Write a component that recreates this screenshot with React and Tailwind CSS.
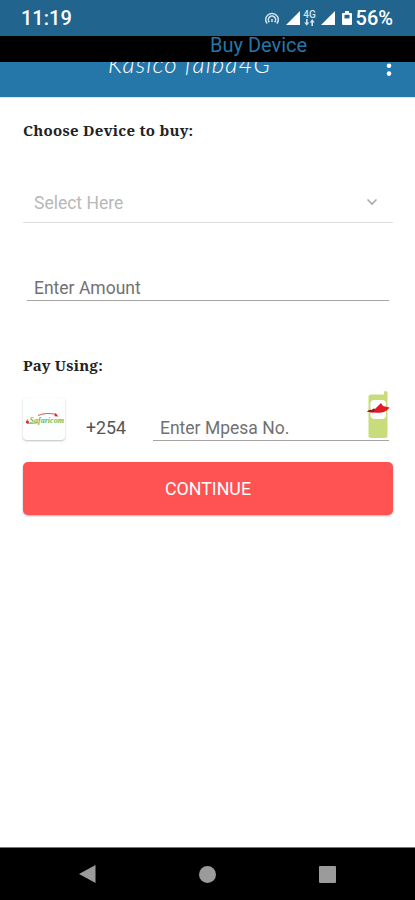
const StatusBar = () => (
  <div className="flex h-9 items-center bg-[#21658f] pl-[21px] pr-[22px] text-white">
    <span className="text-[20px] font-medium leading-9">11:19</span>
    <div className="ml-auto flex items-center">
      {/* Hotspot */}
      <svg className="mr-[6px] h-4 w-4" viewBox="0 0 16 16" fill="none" stroke="#d5e4ee" strokeWidth="1.5">
        <path d="M3.2 13.5A6.3 6 0 1 1 12.8 13.5" />
        <path d="M5.4 12.2A3.6 3.6 0 1 1 10.6 12.2" />
        <path d="M8 9V12" />
      </svg>
      <svg className="h-4 w-[15px]" viewBox="0 0 15 16">
        <path d="M0 15L14 1V15Z" fill="#fff" />
      </svg>
      <div className="ml-[3px] mr-[5px] flex w-3 flex-col items-center">
        <span className="text-[10px] font-medium leading-[9px] text-[#d5e4ee]">4G</span>
        <svg className="h-[7px] w-[11px]" viewBox="0 0 11 7" fill="#d5e4ee">
          <path d="M2 0h1.6v3.5H5.2L2.8 6.7.2 3.5H2Z" />
          <path d="M7.4 7H9V3.4h1.8L8.2.1 5.8 3.4h1.6Z" />
        </svg>
      </div>
      <svg className="h-4 w-[15px]" viewBox="0 0 15 16">
        <path d="M0 15L14 1V15Z" fill="#fff" />
      </svg>
      {/* Battery */}
      <svg className="ml-[6px] mr-1 h-4 w-[10px]" viewBox="0 0 10 16">
        <path d="M3 1h4v2h2q1 0 1 1v10q0 1-1 1H1q-1 0-1-1V4q0-1 1-1h2Z" fill="#fff" />
        <path d="M2.5 4.8h5v3.6h-5Z" fill="#21658f" />
      </svg>
      <span className="text-[20px] font-medium leading-9">56%</span>
    </div>
  </div>
)

const AppBar = () => (
  <div className="flex h-[35px] items-start justify-between overflow-hidden bg-[#2477a8] pl-[108px] pr-[23px]">
    <span className="-mt-[10px] whitespace-nowrap font-['Lato',sans-serif] text-[24px] font-light italic leading-6 tracking-[1.1px] text-white">
      Kasico faiba4G
    </span>
    <svg className="h-4 w-[6px]" viewBox="0 0 6 16" fill="#fff">
      <circle cx="3" cy="3.8" r="2.3" />
      <circle cx="3" cy="11.6" r="2.3" />
    </svg>
  </div>
)

const SafaricomLogo = () => (
  <div className="flex h-[42px] w-[42px] items-center justify-center rounded bg-[#fcfffd] shadow-[0_1px_2px_rgba(0,0,0,0.25)]">
    <svg className="h-[42px] w-[42px]" viewBox="0 0 42 42">
      <path d="M15 17.5Q23 14 34 16.5" fill="none" stroke="#e2534f" strokeWidth="1" />
      <path d="M32 15L35.5 18.5L31.5 18.3Z" fill="#d92a30" />
      <path d="M5 21Q1.5 25.5 5.5 25.5Q10 25.7 15 24.7" fill="none" stroke="#eb8a86" strokeWidth="1" />
      <circle cx="4.5" cy="24" r="1.5" fill="#d92a30" />
      <text
        x="6.5"
        y="24.5"
        textLength="34.5"
        lengthAdjust="spacingAndGlyphs"
        fill="#6cbd5d"
        fontFamily="Liberation Serif, serif"
        fontSize="8"
        fontWeight="bold"
        fontStyle="italic"
      >
        Safaricom
      </text>
    </svg>
  </div>
)

const MpesaPhone = () => (
  <svg className="-mr-px h-12 w-[23px]" viewBox="0 0 23 48">
    <path d="M1.5 6Q1.5 3.5 4 3.5H17V1Q17 0 18.5 0Q20.5 0 20.5 1.5V44.5Q20.5 47 18 47H4Q1.5 47 1.5 44.5Z" fill="#c9dc7b" />
    <rect x="3.5" y="9" width="15.5" height="19" rx="4" fill="#fff" />
    <path d="M0 20.5Q3 18 5 19Q7 16.5 8 18Q11 15 14 12L16 15L22.5 16.5Q20 20.5 15 21.5Q7 22.5 0 20.5Z" fill="#e21b24" />
    <path d="M0 20.5Q3 18 5 19Q7 16.5 8 19L7 21Q3 21.5 0 20.5Z" fill="#8f2028" />
  </svg>
)

const NavBar = () => (
  <div className="flex h-[53px] items-center justify-between border-t border-[#777] bg-black px-[79px]">
    <svg className="h-[18px] w-[17px]" viewBox="0 0 17 18">
      <path d="M0 9L16.5 0V18Z" fill="#9b9b9b" />
    </svg>
    <div className="h-[17px] w-[17px] rounded-full bg-[#9b9b9b]" />
    <div className="h-[17px] w-[17px] rounded-[1px] bg-[#9b9b9b]" />
  </div>
)

const App = () => {
  return (
    <div className="flex h-[900px] w-[415px] flex-col overflow-hidden bg-white font-['Roboto',sans-serif]">
      <StatusBar />
      <div className="h-[26px] bg-black pl-[210px] text-[20px] leading-[18px] text-[#2477a8]">
        Buy Device
      </div>
      <AppBar />

      <main className="flex flex-1 flex-col border-t border-[#d9e3ef] pl-[23px] pr-[22px]">
        <h2 className="mt-[22px] whitespace-nowrap font-['Noto_Serif','DejaVu_Serif_Condensed','DejaVu_Serif',serif] text-[15px] font-bold leading-5 tracking-[0.25px] text-[#222]">
          Choose Device to buy:
        </h2>

        <div className="mt-[42px] flex h-[41px] items-center justify-between border-b border-[#dedede] pl-[11px] pr-[15px]">
          <span className="pt-[2px] text-[17.5px] text-[#b8b8b8]">Select Here</span>
          <svg className="h-3 w-3" viewBox="0 0 12 12" fill="none" stroke="#aaa" strokeWidth="1.6">
            <path d="M1.5 3.5L6 8L10.5 3.5" />
          </svg>
        </div>

        <div className="mx-1 mt-[51px] flex h-[27px] items-center border-b border-[#a5a5a5] pl-[7px] pt-[2px] text-[17.5px] text-[#717171]">
          Enter Amount
        </div>

        <h2 className="mt-[54px] whitespace-nowrap font-['Noto_Serif','DejaVu_Serif_Condensed','DejaVu_Serif',serif] text-[15px] font-bold leading-5 tracking-[0.25px] text-[#222]">
          Pay Using:
        </h2>

        <div className="mt-4 flex h-[50px] items-end">
          <div className="pb-px">
            <SafaricomLogo />
          </div>
          <span className="ml-[21px] w-[67px] pb-px text-[17.8px] leading-6 text-[#555]">+254</span>
          <div className="mr-1 flex h-[50px] flex-1 items-start justify-between border-b border-[#a5a5a5] pl-[7px]">
            <span className="mt-[25px] text-[17.5px] leading-6 text-[#717171]">Enter Mpesa No.</span>
            <MpesaPhone />
          </div>
        </div>

        <button className="mt-[21px] h-[53px] w-full rounded-[5px] bg-[#ff5252] pt-[2px] text-[17.8px] text-white shadow-[0_1px_2px_rgba(0,0,0,0.3)]">
          CONTINUE
        </button>
      </main>

      <NavBar />
    </div>
  )
}

export default App
